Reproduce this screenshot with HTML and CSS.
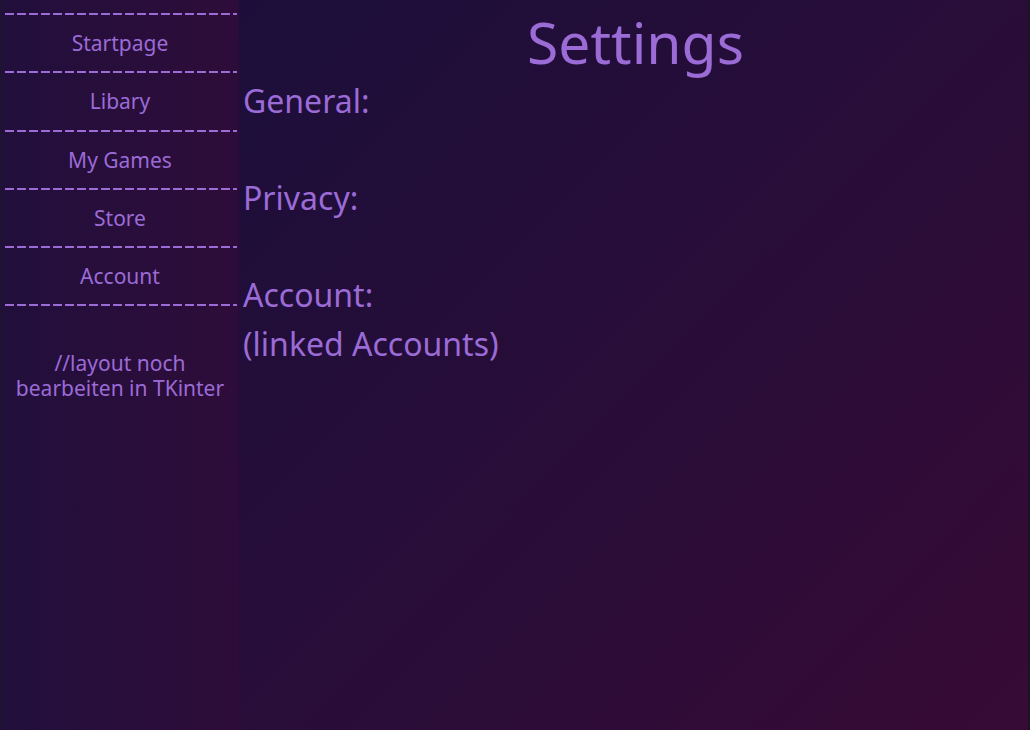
FILE: index.html
```html
<!DOCTYPE html>
<html lang="de">
<head>
    <meta charset="UTF-8">
    <meta name="viewport" content="width=device-width, initial-scale=1.0">
    <title>Settings</title>
    <link rel="stylesheet" href="styles.css">
</head>
<body>

<aside class="sidebar">
    <div class="dash"></div>
    <a class="nav-link" href="#">Startpage</a>
    <div class="dash"></div>
    <a class="nav-link" href="#">Libary</a>
    <div class="dash"></div>
    <a class="nav-link" href="#">My Games</a>
    <div class="dash"></div>
    <a class="nav-link" href="#">Store</a>
    <div class="dash"></div>
    <a class="nav-link" href="#">Account</a>
    <div class="dash"></div>
    <p class="note">//layout noch<br>bearbeiten in TKinter</p>
</aside>

<main class="content">
    <h1 class="title">Settings</h1>
    <div class="section">General:</div>
    <div class="section"></div>
    <div class="section">Privacy:</div>
    <div class="section"></div>
    <div class="section">Account:</div>
    <div class="section">(linked Accounts)</div>
</main>

</body>
</html>
```

FILE: styles.css
```css
* {box-sizing: border-box; margin: 0; padding: 0; font-family: "Noto Sans", "Liberation Sans", sans-serif;}
html, body {height: 100%;}
body {display: flex; background: #1e0e3a; color: #9b6bd6; border-left: 1px solid #181828; border-right: 2px solid #1a1226; overflow: hidden;}

.sidebar {width: 238px; flex-shrink: 0; padding-top: 13px; background: linear-gradient(to right, #220f3c, #2e0c39); display: flex; flex-direction: column;}
.dash {height: 2px; margin: 0 2px 0 4px; background: repeating-linear-gradient(to right, #9b6bd6 0 9px, transparent 9px 12px);}
.nav-link {height: 56.3px; display: flex; align-items: center; justify-content: center; color: #9b6bd6; text-decoration: none; font-size: 21px;}
.nav-link:hover {color: #c9a4ff;}
.note {margin-top: 45px; text-align: center; font-size: 21px; line-height: 24.5px;}

.content {flex: 1; background: linear-gradient(135deg, #1c0e3a 0%, #290d38 55%, #370b35 100%); padding-left: 4px;}
.title {text-align: center; font-weight: normal; font-size: 57px; line-height: 64px; margin-top: 10px; margin-bottom: 3px;}
.section {font-size: 32px; height: 48.5px; line-height: 48.5px;}
```
